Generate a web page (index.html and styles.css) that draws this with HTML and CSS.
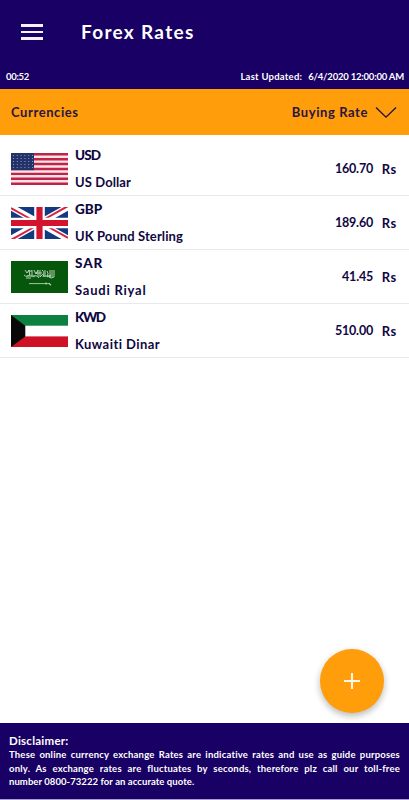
FILE: index.html
```html
<!DOCTYPE html>
<html lang="en">
  <head>
    <meta charset="UTF-8" />
    <meta name="viewport" content="width=device-width, initial-scale=1.0" />
    <title>Forex Rates</title>
    <link rel="stylesheet" href="styles.css">
  </head>
  <body>
    <header>
      <div class="topbar">
        <button class="menu" aria-label="Menu">
          <span></span>
          <span></span>
          <span></span>
        </button>
        <h1>Forex Rates</h1>
      </div>
      <div class="status">
        <span class="timer">00:52</span>
        <span class="updated">Last Updated:</span>
        <span class="date">6/4/2020 12:00:00 AM</span>
      </div>
    </header>

    <div class="filter">
      <span class="label">Currencies</span>
      <span class="rate-type">Buying Rate</span>
      <svg class="arrow" width="22" height="13" viewBox="0 0 22 13">
        <path d="M1 1.5L11 11.2L21 1.5" fill="none" stroke="#1c1030" stroke-width="1.3" />
      </svg>
    </div>

    <main>
      <div class="row">
        <svg class="flag" viewBox="0 0 57 32" preserveAspectRatio="none">
          <rect width="57" height="32" fill="#fbe3ea" />
          <path d="M0 1.25H57M0 6.15H57M0 11.05H57M0 15.95H57M0 20.85H57M0 25.75H57M0 30.7H57" stroke="#be2446" stroke-width="2.45" />
          <rect width="23" height="17.2" fill="#233369" />
          <path d="M2 2.5H22M2 5.5H22M2 8.5H22M2 11.5H22M2 14.5H22" stroke="#8797c0" stroke-width="1" stroke-dasharray="1 2.8" />
        </svg>
        <div class="name">
          <b class="usd">USD</b>
          <span class="us-dollar">US Dollar</span>
        </div>
        <div class="value">160.70</div>
        <div class="unit">Rs</div>
      </div>
      <div class="row">
        <svg class="flag" viewBox="0 0 57 32" preserveAspectRatio="none">
          <rect width="57" height="32" fill="#123a80" />
          <path d="M0 0L57 32M57 0L0 32" stroke="#fff" stroke-width="6.4" />
          <path d="M0 1L28.5 17M28.5 15L57 31M57 -1L28.5 15M28.5 17L0 33" stroke="#d3233f" stroke-width="2" />
          <path d="M28.5 0V32M0 16H57" stroke="#fff" stroke-width="10.6" />
          <path d="M28.5 0V32M0 16H57" stroke="#d3142f" stroke-width="6.2" />
        </svg>
        <div class="name">
          <b class="gbp">GBP</b>
          <span class="pound">UK Pound Sterling</span>
        </div>
        <div class="value">189.60</div>
        <div class="unit">Rs</div>
      </div>
      <div class="row">
        <svg class="flag" viewBox="0 0 57 32" preserveAspectRatio="none">
          <rect width="57" height="32" fill="#06570b" />
          <g fill="none" stroke="#b4cfb4" stroke-width="1">
            <path d="M14 9l2 3 2-3 1 6M13 14q3 3 6-1M15 17h5M21 9v7M23 9l2 4 2-4v7M22 16q3-3 6 1M29 9v7l3-3M31 9q3 2 1 7M34 9v7M36 10q2 2 0 6l4-2M39 9v8M41 9v7M43 9v7q-3 2-5 0M24 12h7M17 10h4M16 15h8M32 15h8" />
            <path d="M18 22.6H39" stroke-width=".9" />
            <path d="M35 21.4v2.2M38 22.4l2 1.8" stroke-width="1.2" />
          </g>
        </svg>
        <div class="name">
          <b class="sar">SAR</b>
          <span class="riyal">Saudi Riyal</span>
        </div>
        <div class="value">41.45</div>
        <div class="unit">Rs</div>
      </div>
      <div class="row">
        <svg class="flag" viewBox="0 0 57 32" preserveAspectRatio="none">
          <rect width="57" height="32" fill="#fff" />
          <rect width="57" height="10.7" fill="#0b8040" />
          <rect y="21.4" width="57" height="10.6" fill="#cf1126" />
          <path d="M0 0L14.3 10.7V21.4L0 32Z" fill="#080808" />
        </svg>
        <div class="name">
          <b class="kwd">KWD</b>
          <span class="dinar">Kuwaiti Dinar</span>
        </div>
        <div class="value">510.00</div>
        <div class="unit">Rs</div>
      </div>
    </main>

    <button class="add" aria-label="Add">
      <svg width="18" height="18" viewBox="0 0 18 18">
        <path d="M9 1V17M1 9H17" stroke="#fff8e8" stroke-width="2.1" />
      </svg>
    </button>

    <footer>
      <h2>Disclaimer:</h2>
      <p class="line1">These online currency exchange Rates are indicative rates and use as guide purposes</p>
      <p class="line2">only. As exchange rates are fluctuates by seconds, therefore plz call our toll-free</p>
      <p class="line3">number 0800-73222 for an accurate quote.</p>
    </footer>
  </body>
</html>
```
FILE: styles.css
```css
* {
  box-sizing: border-box;
}
body {
  margin: 0;
  height: 800px;
  display: flex;
  flex-direction: column;
  position: relative;
  overflow: hidden;
  background: #fff;
  font-family: "Lato", "Open Sans", sans-serif;
  color: #100742;
}
button {
  border: none;
  padding: 0;
  cursor: pointer;
}
header {
  height: 89px;
  background: #180064;
  color: #fff;
}
.topbar {
  height: 64px;
  display: flex;
  align-items: center;
  padding-left: 21px;
}
.menu {
  width: 22px;
  background: none;
  display: flex;
  flex-direction: column;
  gap: 4px;
}
.menu span {
  height: 2.5px;
  background: #f5f2ff;
}
h1 {
  margin: 0 0 0 38px;
  font-size: 19px;
  font-weight: bold;
  line-height: 24px;
  letter-spacing: 1.3px;
}
.status {
  display: flex;
  padding: 0 5px 0 6px;
  font-size: 9.5px;
  font-weight: bold;
  line-height: 25px;
  white-space: nowrap;
}
.timer {
  letter-spacing: -0.3px;
}
.updated {
  margin-left: auto;
  margin-right: 6px;
  letter-spacing: 0.25px;
}
.date {
  letter-spacing: -0.2px;
}
.filter {
  height: 46px;
  background: #ff9d0a;
  display: flex;
  align-items: center;
  padding: 0 12px 0 11px;
  font-size: 13px;
  font-weight: bold;
  color: #2a1540;
  letter-spacing: 0.58px;
}
.rate-type {
  margin-left: auto;
  margin-right: 7px;
}
main {
  flex: 1;
  padding-top: 7px;
}
.row {
  height: 54px;
  display: flex;
  align-items: center;
  border-bottom: 1px solid #e9e9ed;
  padding: 0 12px 0 11px;
  font-size: 13px;
  font-weight: bold;
}
.flag {
  width: 57px;
  height: 32px;
  margin-right: 7px;
}
.name {
  display: flex;
  flex-direction: column;
  line-height: 27px;
}
.name b {
  font-size: 13.5px;
  font-weight: 900;
}
.usd {
  letter-spacing: -0.9px;
}
.gbp {
  letter-spacing: 0;
}
.sar {
  letter-spacing: 0.9px;
}
.kwd {
  letter-spacing: -1.4px;
}
.us-dollar,
.pound {
  letter-spacing: 0.1px;
}
.riyal {
  letter-spacing: 0.78px;
}
.dinar {
  letter-spacing: 0.45px;
}
.value {
  margin-left: auto;
  font-size: 12.5px;
  letter-spacing: -0.2px;
}
.unit {
  width: 24px;
  text-align: right;
  letter-spacing: 0.7px;
}
.add {
  position: absolute;
  left: 320px;
  top: 649px;
  width: 64px;
  height: 64px;
  border-radius: 50%;
  background: #ff9d0a;
  box-shadow: 0 3px 7px rgba(0, 0, 0, 0.28);
  display: flex;
  align-items: center;
  justify-content: center;
}
footer {
  height: 77px;
  background: #180064;
  border-bottom: 1px solid #a8a0cf;
  color: #fff;
  padding: 10px 9px 0;
}
h2 {
  margin: 0;
  font-size: 11.5px;
  font-weight: bold;
  line-height: 15px;
  letter-spacing: 0.25px;
}
footer p {
  margin: 0;
  font-size: 9.5px;
  font-weight: bold;
  line-height: 13.7px;
  letter-spacing: 0.2px;
  white-space: nowrap;
  text-align: justify;
  text-align-last: justify;
}
footer .line3 {
  text-align-last: left;
  letter-spacing: 0.07px;
}
```
